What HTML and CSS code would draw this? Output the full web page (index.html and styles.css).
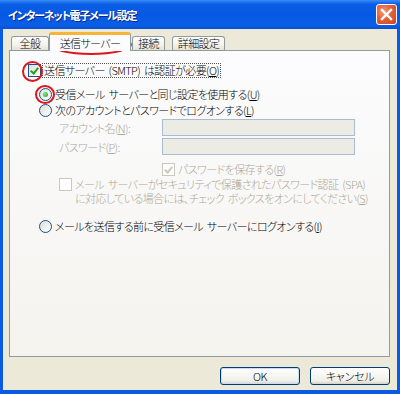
FILE: index.html
```html
<!DOCTYPE html>
<html lang="ja">
<head>
<meta charset="utf-8"/>
<title>インターネット電子メール設定</title>
<link rel="stylesheet" href="styles.css">
</head>
<body>
<div class="window">
  <div class="titlebar">
    <span class="title">インターネット電子メール設定</span>
    <button class="close-btn" aria-label="閉じる">
      <svg width="13" height="13" viewBox="0 0 13 13"><path d="M2 2 L11 11 M11 2 L2 11" stroke="#fff" stroke-width="2.4" stroke-linecap="square"/></svg>
    </button>
  </div>
  <div class="client">
    <div class="tabs">
      <div class="tab tab-general">全般</div>
      <div class="tab active">送信サーバー</div>
      <div class="tab">接続</div>
      <div class="tab tab-advanced">詳細設定</div>
    </div>
    <div class="panel">
      <div class="row row-auth">
        <span class="chk checked"></span>
        <span class="focus">送信サーバー (SMTP) は認証が必要(<u>O</u>)</span>
      </div>
      <div class="row row-radio1 indent1">
        <span class="radio on"></span>
        <span>受信メール サーバーと同じ設定を使用する(<u>U</u>)</span>
      </div>
      <div class="row row-radio2 indent1">
        <span class="radio"></span>
        <span>次のアカウントとパスワードでログオンする(<u>L</u>)</span>
      </div>
      <div class="field row-field1 indent2">
        <span class="field-label">アカウント名(<u>N</u>):</span>
        <span class="textbox"></span>
      </div>
      <div class="field row-field2 indent2">
        <span class="field-label">パスワード(<u>P</u>):</span>
        <span class="textbox"></span>
      </div>
      <div class="row row-save disabled">
        <span class="chk dis checked-grey"></span>
        <span>パスワードを保存する(<u>R</u>)</span>
      </div>
      <div class="row row-spa indent2 disabled">
        <span class="chk dis"></span>
        <span class="spa-text">メール サーバーがセキュリティで保護されたパスワード認証 (SPA)<br>に対応している場合には、チェック ボックスをオンにしてください(<u>S</u>)</span>
      </div>
      <div class="row row-radio3 indent1">
        <span class="radio"></span>
        <span>メールを送信する前に受信メール サーバーにログオンする(<u>I</u>)</span>
      </div>
    </div>
    <div class="buttons">
      <button class="btn">OK</button>
      <button class="btn">キャンセル</button>
    </div>
  </div>

  <div class="mark mark-tab"></div>
  <div class="mark mark-chk"></div>
  <div class="mark mark-radio"></div>
</div>
</body>
</html>
```
FILE: styles.css
```css
* {
  box-sizing: border-box;
}

body {
  margin: 0;
  width: 400px;
  height: 394px;
  font-family: "Noto Sans CJK JP", "Noto Sans", sans-serif;
  font-size: 11px;
  font-weight: 300;
  letter-spacing: -0.6px;
  word-spacing: 2px;
  font-feature-settings: "palt";
  color: #000;
  background: #0054e3;
}

u {
  text-decoration: underline;
  text-underline-offset: 1px;
}

.window {
  position: relative;
  width: 400px;
  height: 394px;
  display: flex;
  flex-direction: column;
  background: #0a5ae2;
  padding: 0 3px 4px 3px;
}

.titlebar {
  height: 29px;
  margin: 0 -3px;
  padding: 0 3px 0 8px;
  display: flex;
  align-items: center;
  justify-content: space-between;
  background: linear-gradient(#3b8df6 0%, #0b5fe6 14%, #0558e3 50%, #0a5fe8 85%, #0850d6 100%);
}

.title {
  color: #fff;
  font-weight: bold;
  font-size: 11px;
  letter-spacing: -1.2px;
  text-shadow: 1px 1px 0 #0a2a8a;
}

.close-btn {
  width: 21px;
  height: 21px;
  padding: 0;
  border: 1px solid #fff;
  border-radius: 3px;
  background: radial-gradient(circle at 35% 35%, #f39a7a 0%, #e4603a 45%, #cc4418 100%);
  display: flex;
  align-items: center;
  justify-content: center;
}

.client {
  flex: 1;
  background: #ece9d8;
  padding: 4px 7px 0 6px;
  display: flex;
  flex-direction: column;
}

.tabs {
  display: flex;
  align-items: flex-end;
  height: 17px;
  padding-left: 2px;
  position: relative;
  z-index: 2;
}

.tab {
  height: 14px;
  line-height: 13px;
  padding: 0 5px;
  text-align: center;
  border: 1px solid #919b9c;
  border-bottom: none;
  border-radius: 3px 3px 0 0;
  background: linear-gradient(#ffffff, #f3f2ec 60%, #e6e3d5);
  margin-right: 1px;
}

.tab-general {
  width: 38px;
  margin-right: 0;
}

.tab-advanced {
  margin-left: 6px;
}

.tab.active {
  width: 82px;
  height: 19px;
  margin-bottom: -1px;
  padding: 1px 0 0;
  border-top: 3px solid #f6b43a;
  background: #fcfcfe;
  line-height: 14px;
}

.panel {
  height: 307px;
  border: 1px solid #919b9c;
  background: linear-gradient(#fcfcfe, #f4f3ee);
  display: flex;
  flex-direction: column;
}

.row {
  display: flex;
  align-items: center;
  height: 13px;
  line-height: 13px;
  white-space: nowrap;
}

.row > span:last-child {
  margin-left: 3px;
}

.indent1 {
  margin-left: 29px;
}

.indent2 {
  margin-left: 49px;
}

.row-auth {
  margin-top: 13px;
  margin-left: 18px;
}

.row-auth > span:last-child {
  margin-left: 2px;
}

.focus {
  outline: 1px dotted #555;
  padding: 0 1px;
}

.row-radio1 {
  margin-top: 11px;
}

.row-radio2 {
  margin-top: 3px;
}

.field {
  display: flex;
  align-items: center;
  height: 17px;
  color: #aca899;
}

.row-field1,
.row-field2 {
  margin-top: 2px;
}

.field-label {
  width: 103px;
}

.textbox {
  width: 193px;
  height: 17px;
  border: 1px solid #a9bcd4;
  background: #ecebe4;
}

.row-save {
  margin-top: 8px;
  margin-left: 152px;
}

.row-spa {
  margin-top: 2px;
  height: auto;
  align-items: flex-start;
}

.spa-text {
  line-height: 14px;
  margin-top: -1px;
}

.row-radio3 {
  margin-top: 15px;
}

.disabled {
  color: #aca899;
}

.chk {
  flex: none;
  width: 13px;
  height: 13px;
  border: 1px solid #1c5180;
  background: linear-gradient(135deg, #dcdcd7, #ffffff);
  position: relative;
}

.chk.dis {
  border-color: #cac8bb;
  background: #fff;
}

.chk.checked::after,
.chk.checked-grey::after {
  content: "";
  position: absolute;
  left: 2px;
  top: 1px;
  width: 3px;
  height: 6px;
  border: solid #21a121;
  border-width: 0 2px 2px 0;
  transform: translate(1px, 0) rotate(40deg);
}

.chk.checked-grey::after {
  border-color: #cac8bb;
}

.radio {
  flex: none;
  width: 13px;
  height: 13px;
  border: 1px solid #1c5180;
  border-radius: 50%;
  background: linear-gradient(135deg, #dcdcd7, #ffffff);
  display: flex;
  align-items: center;
  justify-content: center;
}

.radio.on::after {
  content: "";
  width: 5px;
  height: 5px;
  border-radius: 50%;
  background: radial-gradient(circle at 35% 35%, #7de87d, #21a121);
}

.buttons {
  display: flex;
  justify-content: flex-end;
  gap: 10px;
  margin-top: 10px;
}

.btn {
  width: 80px;
  height: 18px;
  padding: 0;
  font-family: inherit;
  font-size: 11px;
  font-weight: 300;
  letter-spacing: -0.3px;
  font-feature-settings: "palt";
  line-height: 14px;
  border: 1px solid #003c74;
  border-radius: 3px;
  background: linear-gradient(#ffffff, #f0f0ea 80%, #d6d0c5);
  color: #000;
}

.btn:first-child {
  box-shadow: inset 0 0 0 1px #c9daf6;
}

.mark {
  position: absolute;
  border: 2px solid #e0141e;
  border-radius: 50%;
  pointer-events: none;
}

.mark-tab {
  left: 50px;
  top: 34px;
  width: 82px;
  height: 21px;
}

.mark-chk {
  left: 22px;
  top: 61px;
  width: 21px;
  height: 21px;
}

.mark-radio {
  left: 35px;
  top: 85px;
  width: 20px;
  height: 19px;
}
```
